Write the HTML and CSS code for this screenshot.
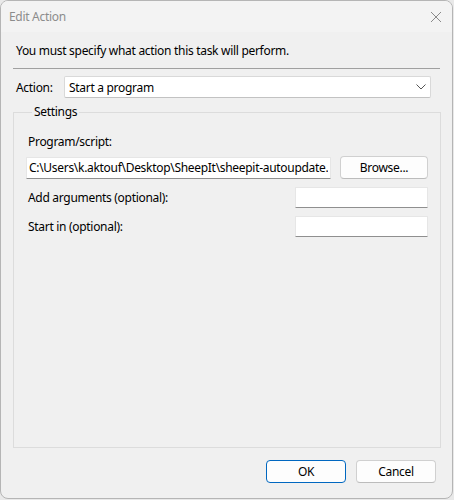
FILE: index.html
```html
<!DOCTYPE html>
<html lang="en">
<head>
    <meta charset="UTF-8">
    <title>Edit Action</title>
    <link rel="stylesheet" href="styles.css">
</head>
<body>
    <div class="window">
        <div class="titlebar">
            <span class="title">Edit Action</span>
            <svg class="close" width="12" height="12" viewBox="0 0 12 12">
                <path d="M1 1 L11 11 M11 1 L1 11" stroke="#8a8a8a" stroke-width="1" fill="none"/>
            </svg>
        </div>
        <div class="content">
            <p class="intro">You must specify what action this task will perform.</p>
            <div class="separator"></div>
            <div class="action-row">
                <label>Action:</label>
                <div class="combo">
                    <span>Start a program</span>
                    <svg width="10" height="6" viewBox="0 0 10 6">
                        <path d="M0.5 0.5 L5 5 L9.5 0.5" stroke="#555" stroke-width="1" fill="none"/>
                    </svg>
                </div>
            </div>
            <fieldset class="settings">
                <legend>Settings</legend>
                <div class="field-label">Program/script:</div>
                <div class="program-row">
                    <input class="text-box path" type="text" value="C:\Users\k.aktouf\Desktop\SheepIt\sheepit-autoupdate.exe">
                    <button class="btn browse">Browse...</button>
                </div>
                <div class="option-row">
                    <span>Add arguments (optional):</span>
                    <input class="text-box small" type="text">
                </div>
                <div class="option-row">
                    <span>Start in (optional):</span>
                    <input class="text-box small" type="text">
                </div>
            </fieldset>
            <div class="buttons">
                <button class="btn default">OK</button>
                <button class="btn">Cancel</button>
            </div>
        </div>
    </div>
</body>
</html>
```

FILE: styles.css
```css
body {
    margin: 0;
    background: #e9e9e9;
    font-family: 'Noto Sans', 'Open Sans', sans-serif;
    font-size: 12px;
    letter-spacing: -0.3px;
    color: #000;
}
.window {
    width: 451px;
    height: 497px;
    border: 1px solid #b5b5b5;
    border-radius: 8px;
    background: #f0f0f0;
    overflow: hidden;
    display: flex;
    flex-direction: column;
}
.titlebar {
    height: 31px;
    background: #f3f3f3;
    display: flex;
    align-items: center;
    justify-content: space-between;
    padding: 0 9px 0 8px;
    flex-shrink: 0;
}
.title {
    color: #8c8c8c;
}
.close {
    margin-right: 1px;
}
.content {
    flex: 1;
    display: flex;
    flex-direction: column;
    padding: 0 12px;
    min-height: 0;
}
.intro {
    margin: 10px 0 0 3px;
    line-height: 17px;
}
.separator {
    height: 1px;
    background: #a0a0a0;
    margin-top: 9px;
    width: 427px;
}
.action-row {
    display: flex;
    align-items: center;
    margin-top: 7px;
    height: 22px;
}
.action-row label {
    width: 48px;
    padding-left: 3px;
}
.combo {
    width: 367px;
    height: 22px;
    box-sizing: border-box;
    background: #fff;
    border: 1px solid #d9d9d9;
    border-bottom-color: #c2c2c2;
    border-radius: 2px;
    display: flex;
    align-items: center;
    justify-content: space-between;
    padding: 0 4px 0 4px;
}
.settings {
    flex: 1;
    min-height: 0;
    margin: 6px 0 0 0;
    width: 428px;
    box-sizing: border-box;
    border: 1px solid #dcdcdc;
    padding: 14px 12px 0 12px;
}
.settings legend {
    padding: 0 2px;
    margin-left: 6px;
    line-height: 16px;
}
.field-label {
    line-height: 16px;
    padding-left: 2px;
}
.program-row {
    display: flex;
    align-items: center;
    justify-content: space-between;
    margin-top: 6px;
    height: 23px;
}
.text-box {
    box-sizing: border-box;
    background: #fff;
    border: 1px solid #e6e6e6;
    border-bottom-color: #8f8f8f;
    border-radius: 1px;
    font-family: inherit;
    font-size: 12px;
    letter-spacing: inherit;
    padding: 0 2px;
    outline: none;
}
.path {
    width: 305px;
    height: 22px;
}
.small {
    width: 133px;
    height: 21px;
}
.btn {
    height: 23px;
    background: #fdfdfd;
    border: 1px solid #d0d0d0;
    border-bottom-color: #bcbcbc;
    border-radius: 4px;
    font-family: inherit;
    font-size: 12px;
    letter-spacing: inherit;
    color: #000;
    padding: 0;
}
.browse {
    width: 88px;
}
.option-row {
    display: flex;
    align-items: center;
    justify-content: space-between;
    margin-top: 8px;
    height: 21px;
}
.option-row span {
    padding-left: 2px;
}
.buttons {
    display: flex;
    justify-content: flex-end;
    gap: 10px;
    margin: 12px 0 15px;
    padding-right: 4px;
}
.buttons .btn {
    width: 80px;
}
.default {
    border: 1px solid #0067c0;
}
```
